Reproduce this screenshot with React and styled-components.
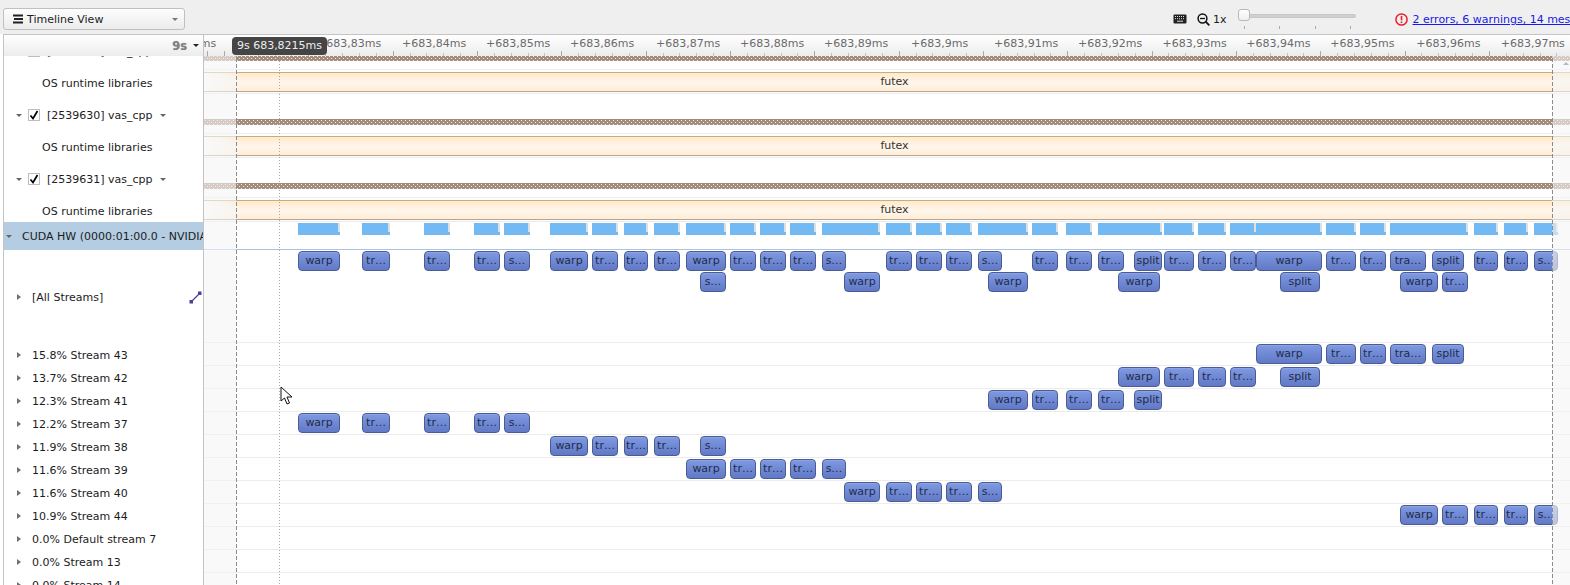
import React from "react";
import styled, { createGlobalStyle } from "styled-components";

const Global = createGlobalStyle`
  html, body { margin: 0; padding: 0; background: #fff; }
  body { font-family: "DejaVu Sans", sans-serif; font-size: 11px; color: #1c1c1c; }
  #root { width: 1570px; height: 585px; overflow: hidden; }
`;

const Page = styled.div`
  width: 1570px;
  height: 585px;
  overflow: hidden;
  display: flex;
  flex-direction: column;
  background: #fff;
`;

const Toolbar = styled.header`
  flex: 0 0 34px;
  display: flex;
  align-items: flex-start;
  background: #efefef;
  padding-left: 3px;
  box-sizing: border-box;
  overflow: hidden;
`;

const ViewSelect = styled.button`
  flex: 0 0 182px;
  height: 22px;
  margin-top: 8px;
  padding: 0 6px 0 8px;
  display: flex;
  align-items: center;
  border: 1px solid #c0c0c0;
  border-radius: 3px;
  background: linear-gradient(#fdfdfd, #ececec);
  font: 11px "DejaVu Sans", sans-serif;
  color: #1c1c1c;
  span { margin-left: 3px; flex: 1; text-align: left; }
`;

const Caret = styled.i`
  display: inline-block;
  flex: none;
  width: 0;
  height: 0;
  border-left: ${(p) => p.$w || 3}px solid transparent;
  border-right: ${(p) => p.$w || 3}px solid transparent;
  border-top: ${(p) => Math.ceil((p.$w || 3) * 0.8)}px solid ${(p) => p.$c || "#666"};
`;

const Twist = styled.i`
  display: inline-block;
  flex: none;
  width: 0;
  height: 0;
  border-top: 3.5px solid transparent;
  border-bottom: 3.5px solid transparent;
  border-left: 4px solid #707070;
`;

const Controls = styled.div`
  flex: none;
  margin-left: 988px;
  height: 34px;
  display: flex;
  align-items: flex-start;
  white-space: nowrap;
`;

const KeyIcon = styled.svg`
  margin-top: 14px;
`;

const ZoomIcon = styled.svg`
  margin: 13px 0 0 10px;
`;

const ZoomText = styled.span`
  margin: 13px 0 0 3px;
  line-height: 14px;
  font-size: 11px;
`;

const Slider = styled.div`
  position: relative;
  width: 118px;
  margin: 14px 0 0 11px;
`;

const SliderTrack = styled.div`
  border: 1px solid #c6c6c6;
  border-radius: 3px;
  background: #d0d0d0;
  box-sizing: border-box;
  height: 4px;
`;

const SliderThumb = styled.div`
  position: absolute;
  left: 0;
  top: -5px;
  width: 12px;
  height: 12px;
  box-sizing: border-box;
  border: 1px solid #b8b8b8;
  border-radius: 3px;
  background: linear-gradient(#ffffff, #efefef);
`;

const SliderTicks = styled.div`
  display: flex;
  justify-content: space-between;
  margin: 8px 4px 0 6px;
  i { width: 1px; height: 3px; background: #aaa; }
`;

const ErrorIcon = styled.svg`
  margin: 13px 0 0 39px;
`;

const MessageLink = styled.a`
  margin: 13px 0 0 5px;
  line-height: 14px;
  font-size: 11px;
  color: #1a1ae8;
  text-decoration: underline;
`;

const Main = styled.div`
  flex: 1;
  min-height: 0;
  margin-left: 3px;
  display: flex;
  flex-direction: column;
  border-top: 1px solid #c4c4c4;
  position: relative;
`;

const Header = styled.div`
  flex: 0 0 21px;
  display: flex;
  background: linear-gradient(#ffffff, #ececec);
`;

const HeaderLabel = styled.div`
  flex: 0 0 201px;
  box-sizing: border-box;
  border-left: 1px solid #c4c4c4;
  border-right: 1px solid #c4c4c4;
  display: flex;
  align-items: center;
  justify-content: flex-end;
  padding-right: 4px;
  b { color: #808080; font-size: 11.5px; margin-right: 6px; text-shadow: 0 0 1px #bbb; }
`;

const Ruler = styled.div`
  flex: 1;
  position: relative;
  overflow: hidden;
  color: #6a6a6a;
  font-size: 11px;
  background-image:
    repeating-linear-gradient(90deg, #a8a8a8 0 1px, transparent 1px 84.33px),
    repeating-linear-gradient(90deg, #c4c4c4 0 1px, transparent 1px 16.866px);
  background-repeat: repeat-x;
  background-size: 100% 5px, 100% 3px;
  background-position: 20px bottom, 20px bottom;
`;

const RulerLabel = styled.span`
  position: absolute;
  top: 2px;
  white-space: nowrap;
  line-height: 14px;
`;

const Tooltip = styled.div`
  position: absolute;
  left: 229px;
  top: 2px;
  height: 18px;
  width: 95px;
  box-sizing: border-box;
  border-radius: 4px;
  background: #454545;
  color: #eeeeee;
  text-align: center;
  line-height: 18px;
  white-space: nowrap;
  z-index: 5;
`;

const Rows = styled.div`
  flex: 1;
  min-height: 0;
  overflow: hidden;
  position: relative;
`;

const Row = styled.div`
  display: flex;
  height: ${(p) => p.$h}px;
  margin-top: ${(p) => p.$offset || 0}px;
`;

const Label = styled.div`
  flex: 0 0 201px;
  box-sizing: border-box;
  border-left: 1px solid #c4c4c4;
  border-right: 1px solid #c4c4c4;
  display: flex;
  align-items: center;
  overflow: hidden;
  white-space: nowrap;
  background: #fff;
  padding-left: ${(p) => p.$pad || 0}px;
  padding-top: ${(p) => p.$top || 0}px;
`;

const CudaLabel = styled(Label)`
  background: #b4cde2;
  padding-left: 2px;
  span { margin-left: 10px; }
`;

const Check = styled.span`
  flex: none;
  width: 12px;
  height: 12px;
  box-sizing: border-box;
  margin: 0 7px 0 6px;
  border: 1px solid #bdbdbd;
  background: #fff;
  display: flex;
  align-items: center;
  justify-content: center;
`;

const StreamName = styled.span`
  margin-left: 11px;
`;

const ExpandIcon = styled.svg`
  margin-left: auto;
  margin-right: 1px;
`;

const Lane = styled.div`
  flex: 1;
  position: relative;
  box-sizing: border-box;
  border-bottom: 1px solid ${(p) => p.$line || "transparent"};
`;

const DottedStrip = styled.svg`
  position: absolute;
  left: 0;
  bottom: 2px;
  display: block;
`;

const Futex = styled.div`
  position: absolute;
  left: 0;
  right: 0;
  top: 8px;
  height: 20px;
  box-sizing: border-box;
  padding-left: 33px;
  padding-right: 18px;
  border-top: 1px solid #c9ab80;
  border-bottom: 1px solid #b9a58f;
  box-shadow: 0 -2px 0 #fff, 0 -3px 0 #ededed;
  background:
    linear-gradient(90deg, #fff 0, rgba(255, 255, 255, 0) 30px),
    linear-gradient(#ffe9c9, #fff6ea 50%, #ffeed9);
  text-align: center;
  line-height: 18px;
  color: #333;
`;

const Block = styled.div`
  position: absolute;
  height: 20px;
  box-sizing: border-box;
  border: 1px solid #4a5c92;
  border-radius: 4px;
  background: linear-gradient(#7f99e2, #6179c6);
  box-shadow: inset 0 1px 0 rgba(255, 255, 255, 0.12);
  color: #212c48;
  text-align: center;
  line-height: 17px;
  white-space: nowrap;
  overflow: hidden;
`;

const Bar = styled.div`
  position: absolute;
  top: 1px;
  height: 12px;
  background: #73b9f3;
  &::after {
    content: "";
    position: absolute;
    right: 0;
    top: 0;
    width: 2px;
    height: 9px;
    background: #dfdfdf;
  }
`;

const Veil = styled.div`
  position: absolute;
  top: 0;
  bottom: 0;
  background: rgba(245, 245, 245, 0.6);
  z-index: 2;
  pointer-events: none;
`;

const Guide = styled.div`
  position: absolute;
  top: 23px;
  bottom: 0;
  width: 1px;
  background: repeating-linear-gradient(${(p) => p.$c} 0 ${(p) => p.$on}px, transparent ${(p) => p.$on}px ${(p) => p.$period}px);
  z-index: 3;
  pointer-events: none;
`;

const ScrollArrow = styled.i`
  position: absolute;
  right: 1px;
  top: 6px;
  width: 0;
  height: 0;
  border-left: 3px solid transparent;
  border-right: 3px solid transparent;
  border-bottom: 3px solid #a9bcd0;
  z-index: 4;
`;

const Cursor = styled.svg`
  position: absolute;
  left: 277px;
  top: 351px;
  z-index: 6;
`;

const rulerLabels = [
  [152, "+683,82ms"], [317, "+683,83ms"], [402, "+683,84ms"], [486, "+683,85ms"], [570, "+683,86ms"],
  [656, "+683,87ms"], [740, "+683,88ms"], [824, "+683,89ms"], [911, "+683,9ms"], [994, "+683,91ms"],
  [1078, "+683,92ms"], [1162.5, "+683,93ms"], [1246.3, "+683,94ms"], [1330.3, "+683,95ms"],
  [1416.3, "+683,96ms"], [1500.7, "+683,97ms"],
];

const S = {
  s37: [[298, 340, "warp"], [362, 390, "tr…"], [424, 450, "tr…"], [474, 500, "tr…"], [504, 530, "s…"]],
  s38: [[550, 588, "warp"], [592, 618, "tr…"], [624, 648, "tr…"], [654, 680, "tr…"], [700, 726, "s…"]],
  s39: [[686, 726, "warp"], [730, 756, "tr…"], [760, 786, "tr…"], [790, 816, "tr…"], [822, 846, "s…"]],
  s40: [[844, 880, "warp"], [886, 912, "tr…"], [916, 942, "tr…"], [946, 972, "tr…"], [978, 1002, "s…"]],
  s41: [[988, 1028, "warp"], [1032, 1058, "tr…"], [1066, 1092, "tr…"], [1098, 1124, "tr…"], [1134, 1162, "split"]],
  s42: [[1118, 1160, "warp"], [1164, 1194, "tr…"], [1198, 1226, "tr…"], [1230, 1256, "tr…"], [1280, 1320, "split"]],
  s43: [[1256, 1322, "warp"], [1326, 1356, "tr…"], [1360, 1386, "tr…"], [1390, 1426, "tra…"], [1432, 1464, "split"]],
  s44: [[1400, 1438, "warp"], [1442, 1468, "tr…"], [1474, 1498, "tr…"], [1504, 1528, "tr…"], [1534, 1558, "s…"]],
};

const stackedLow = new Set(["700", "844", "988", "1118", "1280", "1400", "1442"]);
const all = Object.values(S).flat().sort((a, b) => a[0] - b[0]);

const summary = all.reduce((acc, [a, b]) => {
  const last = acc[acc.length - 1];
  if (last && a <= last[1] - 1) last[1] = Math.max(last[1], b);
  else acc.push([a, b]);
  return acc;
}, []);

const streams = [
  ["15.8% Stream 43", S.s43], ["13.7% Stream 42", S.s42], ["12.3% Stream 41", S.s41],
  ["12.2% Stream 37", S.s37], ["11.9% Stream 38", S.s38], ["11.6% Stream 39", S.s39],
  ["11.6% Stream 40", S.s40], ["10.9% Stream 44", S.s44], ["0.0% Default stream 7", []],
  ["0.0% Stream 13", []], ["0.0% Stream 14", []],
];

const LANE_X = 204;

const Blocks = ({ items, top = () => 1 }) =>
  items.map(([a, b, t]) => (
    <Block key={a} style={{ left: a - LANE_X, width: b - a, top: top(a) }}>{t}</Block>
  ));

const CheckMark = () => (
  <svg width="10" height="10" viewBox="0 0 10 10">
    <path d="M1.5 5.5 L4 8.5 L8.5 1" fill="none" stroke="#000" strokeWidth="1.7" />
  </svg>
);

const Dotted = ({ id }) => (
  <DottedStrip width="1366" height="6" shapeRendering="crispEdges">
    <defs>
      <pattern id={id} width="4" height="4" patternUnits="userSpaceOnUse">
        <rect width="4" height="4" fill="#a58b7a" />
        <rect x="1" y="1" width="1" height="1" fill="#efe9e2" />
        <rect x="3" y="3" width="1" height="1" fill="#efe9e2" />
      </pattern>
    </defs>
    <rect width="1366" height="6" fill={`url(#${id})`} />
  </DottedStrip>
);

const ThreadRow = ({ id, offset }) => (
  <Row $h={34} $offset={offset}>
    <Label $pad={12} $top={8}>
      <Caret $w={3} />
      <Check><CheckMark /></Check>
      <span>[{id}] vas_cpp</span>
      <Caret $w={3} style={{ marginLeft: 7 }} />
    </Label>
    <Lane><Dotted id={`dots-${id}`} /></Lane>
  </Row>
);

const LibRow = () => (
  <Row $h={30}>
    <Label $pad={38} $top={8}>OS runtime libraries</Label>
    <Lane $line="#ececec"><Futex>futex</Futex></Lane>
  </Row>
);

export default function App() {
  return (
    <Page>
      <Global />
      <Toolbar>
        <ViewSelect>
          <svg width="12" height="10" viewBox="0 0 12 10">
            <path d="M1 0.5h10v2h-10zM2 4h9v2h-9zM1 7.5h10v2h-10z" fill="#222" />
          </svg>
          <span>Timeline View</span>
          <Caret $w={3.5} $c="#777" />
        </ViewSelect>
        <Controls>
          <KeyIcon width="14" height="10" viewBox="0 0 14 10">
            <rect x="0.5" y="0.5" width="13" height="9" rx="1" fill="#222" />
            <path d="M2 2.5h10M2 4.7h10" stroke="#ddd" strokeWidth="1" strokeDasharray="1 1" />
            <path d="M4 7.2h6" stroke="#ddd" strokeWidth="1" />
          </KeyIcon>
          <ZoomIcon width="13" height="13" viewBox="0 0 13 13">
            <circle cx="5.5" cy="5.5" r="4.4" fill="none" stroke="#111" strokeWidth="1.5" />
            <path d="M8.7 8.7 L12.3 12.3" stroke="#111" strokeWidth="1.8" />
            <path d="M3 5.5h5" stroke="#111" strokeWidth="1.3" />
          </ZoomIcon>
          <ZoomText>1x</ZoomText>
          <Slider>
            <SliderTrack />
            <SliderThumb />
            <SliderTicks><i /><i /><i /><i /></SliderTicks>
          </Slider>
          <ErrorIcon width="13" height="13" viewBox="0 0 13 13">
            <circle cx="6.5" cy="6.5" r="5.6" fill="none" stroke="#e8202a" strokeWidth="1.5" />
            <path d="M6.5 3v4.3" stroke="#e8202a" strokeWidth="1.6" />
            <path d="M6.5 8.4v1.7" stroke="#e8202a" strokeWidth="1.6" />
          </ErrorIcon>
          <MessageLink href="#">2 errors, 6 warnings, 14 messages</MessageLink>
        </Controls>
      </Toolbar>
      <Main>
        <Header>
          <HeaderLabel><b>9s</b><Caret $w={3} $c="#222" /></HeaderLabel>
          <Ruler>
            {rulerLabels.map(([x, t]) => (
              <RulerLabel key={t} style={{ left: x - LANE_X }}>{t}</RulerLabel>
            ))}
          </Ruler>
        </Header>
        <Tooltip>9s 683,8215ms</Tooltip>
        <Rows>
          <ThreadRow id="2539629" offset={-26} />
          <LibRow />
          <ThreadRow id="2539630" />
          <LibRow />
          <ThreadRow id="2539631" />
          <LibRow />
          <Row $h={28}>
            <CudaLabel><Caret $w={3} /><span>CUDA HW (0000:01:00.0 - NVIDIA GeForce)</span></CudaLabel>
            <Lane $line="#a9c4e0">
              {summary.map(([a, b]) => (
                <Bar key={a} style={{ left: a - LANE_X, width: b - a }} />
              ))}
            </Lane>
          </Row>
          <Row $h={93}>
            <Label $pad={13} $top={1}>
              <Twist />
              <StreamName>[All Streams]</StreamName>
              <ExpandIcon width="13" height="13" viewBox="0 0 13 13">
                <path d="M2 11 L11 2" stroke="#4b3f96" strokeWidth="1.3" />
                <rect x="0.5" y="9" width="3.5" height="3.5" fill="#4b3f96" />
                <rect x="9" y="0.5" width="3.5" height="3.5" fill="#4b3f96" />
              </ExpandIcon>
            </Label>
            <Lane $line="#ececec">
              <Blocks items={all} top={(a) => (stackedLow.has(String(a)) ? 22 : 1)} />
            </Lane>
          </Row>
          {streams.map(([name, items]) => (
            <Row key={name} $h={23}>
              <Label $pad={13} $top={1}><Twist /><StreamName>{name}</StreamName></Label>
              <Lane $line="#ececec"><Blocks items={items} /></Lane>
            </Row>
          ))}
          <Veil style={{ left: 201, width: 32 }} />
          <Veil style={{ left: 1549, right: 0 }} />
          <ScrollArrow />
        </Rows>
        <Guide $on={4} $period={6} $c="#8c8c8c" style={{ left: 233 }} />
        <Guide $on={1} $period={3} $c="#a8a8a8" style={{ left: 276 }} />
        <Guide $on={4} $period={6} $c="#8c8c8c" style={{ left: 1549 }} />
        <Cursor width="14" height="19" viewBox="0 0 14 19">
          <path d="M1 1 L1 15 L4.5 12 L7 18 L9.5 17 L7 11 L12 11 Z" fill="#fff" stroke="#111" strokeWidth="1" />
        </Cursor>
      </Main>
    </Page>
  );
}
